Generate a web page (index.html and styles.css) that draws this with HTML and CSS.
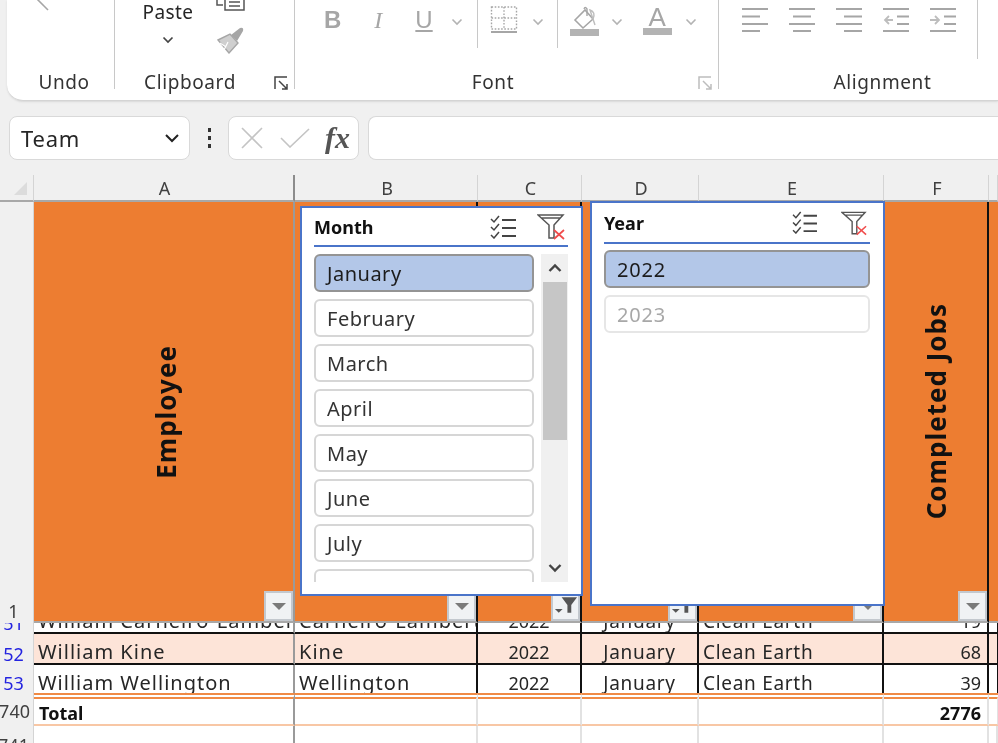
FILE: index.html
```html
<!DOCTYPE html>
<html lang="en">
<head>
<meta charset="utf-8">
<title>Team workbook</title>
<link rel="stylesheet" href="styles.css">
</head>
<body>
<div class="app">
  <header class="ribbon">
    <section class="group group-undo">
      <div class="tools">
        <svg class="undo-arrow" width="20" height="12" viewBox="0 0 20 12"><path d="M2 -2 L14 10" fill="none" stroke="#a6a6a6" stroke-width="1.6"/></svg>
      </div>
      <div class="group-label">Undo</div>
    </section>
    <section class="group group-clipboard">
      <div class="tools">
        <div class="paste">
          <span class="paste-text">Paste</span>
          <svg width="12" height="8" viewBox="0 0 12 8"><path d="M1.5 1.5 L6 6 L10.5 1.5" fill="none" stroke="#444" stroke-width="1.7"/></svg>
        </div>
        <div class="clip-icons">
          <svg width="30" height="12" viewBox="0 0 30 12"><path d="M1 -2 V5 H7 M9 -2 V10 H28 V-2 M13 2 H24 M13 6 H24" fill="none" stroke="#555" stroke-width="1.5"/></svg>
          <svg width="30" height="28" viewBox="0 0 30 28"><path d="M2 14 L14 8 L22 17 L13 27 Z" fill="#cfcfcf" stroke="#a6a6a6" stroke-width="1.4"/><path d="M15 9 L24 2 Q28 1 27 5 L21 15 Z" fill="#a6a6a6"/><path d="M8 24 L12 16 M4 17 L10 21" stroke="#fff" stroke-width="1.2"/></svg>
        </div>
      </div>
      <div class="group-label">Clipboard</div>
      <svg class="launcher" width="15" height="15" viewBox="0 0 15 15"><path d="M1 13 V1 H13 M5 5 L13 13 M8 13 H13 V8" fill="none" stroke="#444" stroke-width="1.5"/></svg>
    </section>
    <section class="group group-font">
      <div class="tools font-tools">
        <span class="fmt fmt-b">B</span>
        <span class="fmt fmt-i">I</span>
        <span class="fmt fmt-u">U</span>
        <svg class="chev chev-u" width="12" height="8" viewBox="0 0 12 8"><path d="M1.5 1.5 L6 6 L10.5 1.5" fill="none" stroke="#b3b3b3" stroke-width="1.6"/></svg>
        <i class="tool-sep sep-a"></i>
        <svg class="ico-border" width="28" height="30" viewBox="0 0 28 30"><path d="M1.5 2 H26.5 V24 H1.5 Z M14 2 V24 M1.5 13 H26.5" fill="none" stroke="#a6a6a6" stroke-width="1.4" stroke-dasharray="1.6 1.6"/><rect x="1" y="26" width="26" height="2" fill="#a6a6a6"/></svg>
        <svg class="chev chev-b" width="12" height="8" viewBox="0 0 12 8"><path d="M1.5 1.5 L6 6 L10.5 1.5" fill="none" stroke="#b3b3b3" stroke-width="1.6"/></svg>
        <i class="tool-sep sep-b"></i>
        <svg class="ico-fill" width="29" height="30" viewBox="0 0 29 30"><path d="M5 14 L15 4 L23 13 L13 22 Z" fill="none" stroke="#a6a6a6" stroke-width="1.6"/><path d="M14 3 Q15 0 17 3 V10" fill="none" stroke="#a6a6a6" stroke-width="1.4"/><path d="M23 13 Q26 6 20 4 L25 19" fill="none" stroke="#bdbdbd" stroke-width="1.4"/><rect x="0" y="23" width="29" height="7" fill="#b3b3b3"/></svg>
        <svg class="chev chev-f" width="12" height="8" viewBox="0 0 12 8"><path d="M1.5 1.5 L6 6 L10.5 1.5" fill="none" stroke="#b3b3b3" stroke-width="1.6"/></svg>
        <div class="ico-color"><span>A</span><i></i></div>
        <svg class="chev chev-c" width="12" height="8" viewBox="0 0 12 8"><path d="M1.5 1.5 L6 6 L10.5 1.5" fill="none" stroke="#b3b3b3" stroke-width="1.6"/></svg>
      </div>
      <div class="group-label">Font</div>
      <svg class="launcher" width="15" height="15" viewBox="0 0 15 15"><path d="M1 13 V1 H13 M5 5 L13 13 M8 13 H13 V8" fill="none" stroke="#bdbdbd" stroke-width="1.5"/></svg>
    </section>
    <section class="group group-align">
      <div class="tools align-tools">
        <svg width="26" height="24" viewBox="0 0 26 24"><path d="M0 1 H26 M0 8.500 H18 M0 16 H26 M0 23 H18" stroke="#a6a6a6" stroke-width="1.8"/></svg>
        <svg width="26" height="24" viewBox="0 0 26 24"><path d="M0 1 H26 M4 8.500 H22 M0 16 H26 M4 23 H22" stroke="#a6a6a6" stroke-width="1.8"/></svg>
        <svg width="26" height="24" viewBox="0 0 26 24"><path d="M0 1 H26 M8 8.500 H26 M0 16 H26 M8 23 H26" stroke="#a6a6a6" stroke-width="1.8"/></svg>
        <svg width="26" height="24" viewBox="0 0 26 24"><path d="M0 1 H26 M14 8.500 H26 M14 16 H26 M0 23 H26" stroke="#a6a6a6" stroke-width="1.8"/><path d="M10 12 H2 M6 8 L2 12 L6 16" fill="none" stroke="#bdbdbd" stroke-width="1.8"/></svg>
        <svg width="26" height="24" viewBox="0 0 26 24"><path d="M0 1 H26 M14 8.500 H26 M14 16 H26 M0 23 H26" stroke="#a6a6a6" stroke-width="1.8"/><path d="M0 12 H9 M5 8 L9 12 L5 16" fill="none" stroke="#bdbdbd" stroke-width="1.8"/></svg>
        <i class="tool-sep sep-c"></i>
      </div>
      <div class="group-label">Alignment</div>
    </section>
  </header>

  <div class="formula-bar">
    <div class="name-box">
      <span>Team</span>
      <svg width="16" height="10" viewBox="0 0 16 10"><path d="M2 2 L8 8 L14 2" fill="none" stroke="#222" stroke-width="2"/></svg>
    </div>
    <div class="dots"><i></i><i></i><i></i></div>
    <div class="fx-buttons">
      <svg width="22" height="22" viewBox="0 0 22 22"><path d="M1 1 L21 21 M21 1 L1 21" stroke="#c4c4c4" stroke-width="1.6"/></svg>
      <svg width="30" height="20" viewBox="0 0 30 20"><path d="M1 10 L10 19 L29 1" fill="none" stroke="#c4c4c4" stroke-width="1.6"/></svg>
      <span class="fx">fx</span>
    </div>
    <div class="formula-input"></div>
  </div>

  <div class="sheet">
    <div class="corner"><i></i></div>
    <div class="col">A</div>
    <div class="col">B</div>
    <div class="col">C</div>
    <div class="col">D</div>
    <div class="col">E</div>
    <div class="col">F</div>
    <div class="col"></div>

    <div class="rownum row-one">1</div>
    <div class="head freeze"><span class="vtext">Employee</span><span class="drop"><i></i></span></div>
    <div class="head black"><span class="drop"><i></i></span></div>
    <div class="head black"><span class="drop"><svg width="26" height="24" viewBox="0 0 26 24"><path d="M2 15 H10 L6 19 Z" fill="#555"/><path d="M9 3 H25 L19 11 V19 H15 V11 Z" fill="#555"/></svg></span></div>
    <div class="head black"><span class="drop"><svg width="26" height="24" viewBox="0 0 26 24"><path d="M2 15 H10 L6 19 Z" fill="#555"/><path d="M9 3 H25 L19 11 V19 H15 V11 Z" fill="#555"/></svg></span></div>
    <div class="head black"><span class="drop"><i></i></span></div>
    <div class="head black"><span class="vtext">Completed Jobs</span><span class="drop"><i></i></span></div>
    <div class="head"></div>

    <div class="rownum blue r51">51</div>
    <div class="cell r51 freeze name">William Carneiro-Lambert</div>
    <div class="cell r51 name">Carneiro-Lambert</div>
    <div class="cell r51 center num">2022</div>
    <div class="cell r51 center">January</div>
    <div class="cell r51">Clean Earth</div>
    <div class="cell r51 right num">19</div>
    <div class="cell r51"></div>

    <div class="rownum blue r52">52</div>
    <div class="cell r52 band freeze name">William Kine</div>
    <div class="cell r52 band name">Kine</div>
    <div class="cell r52 band center num">2022</div>
    <div class="cell r52 band center">January</div>
    <div class="cell r52 band">Clean Earth</div>
    <div class="cell r52 band right num">68</div>
    <div class="cell r52 band"></div>

    <div class="rownum blue r53">53</div>
    <div class="cell r53 freeze name">William Wellington</div>
    <div class="cell r53 name">Wellington</div>
    <div class="cell r53 center num">2022</div>
    <div class="cell r53 center">January</div>
    <div class="cell r53">Clean Earth</div>
    <div class="cell r53 right num">39</div>
    <div class="cell r53"></div>

    <div class="rownum r740">740</div>
    <div class="total freeze">Total</div>
    <div class="total"></div>
    <div class="total"></div>
    <div class="total"></div>
    <div class="total"></div>
    <div class="total right">2776</div>
    <div class="total"></div>

    <div class="rownum r741">741</div>
    <div class="blank freeze"></div>
    <div class="blank"></div>
    <div class="blank"></div>
    <div class="blank"></div>
    <div class="blank"></div>
    <div class="blank"></div>
    <div class="blank"></div>
  </div>

  <aside class="slicer slicer-month">
    <div class="slicer-head">
      <span class="slicer-title">Month</span>
      <svg class="ms" width="27" height="24" viewBox="0 0 27 24"><path d="M1 4 L4 7 L9 1 M1 12 L4 15 L9 9 M1 20 L4 23 L9 17" fill="none" stroke="#444" stroke-width="1.5"/><path d="M12 5 H26 M12 13 H26 M12 21 H26" stroke="#444" stroke-width="2"/></svg>
      <svg class="cf" width="28" height="27" viewBox="0 0 28 27"><path d="M1 2 H26 L17 12 V25 H12 V12 Z M4 5 H23" fill="none" stroke="#555" stroke-width="1.5"/><path d="M17 17 L27 26 M27 17 L17 26" stroke="#f04c4c" stroke-width="1.7"/></svg>
    </div>
    <div class="slicer-body">
      <div class="items">
        <div class="item on">January</div>
        <div class="item">February</div>
        <div class="item">March</div>
        <div class="item">April</div>
        <div class="item">May</div>
        <div class="item">June</div>
        <div class="item">July</div>
        <div class="item">August</div>
      </div>
      <div class="scroll">
        <div class="scroll-btn"><svg width="14" height="10" viewBox="0 0 14 10"><path d="M1.500 8 L7 2.500 L12.500 8" fill="none" stroke="#444" stroke-width="2.400"/></svg></div>
        <div class="thumb"></div>
        <div class="scroll-btn scroll-down"><svg width="14" height="10" viewBox="0 0 14 10"><path d="M1.500 2 L7 7.500 L12.500 2" fill="none" stroke="#444" stroke-width="2.400"/></svg></div>
      </div>
    </div>
  </aside>

  <aside class="slicer slicer-year">
    <div class="slicer-head">
      <span class="slicer-title">Year</span>
      <svg class="ms" width="26" height="23" viewBox="0 0 27 24"><path d="M1 4 L4 7 L9 1 M1 12 L4 15 L9 9 M1 20 L4 23 L9 17" fill="none" stroke="#444" stroke-width="1.5"/><path d="M12 5 H26 M12 13 H26 M12 21 H26" stroke="#444" stroke-width="2"/></svg>
      <svg class="cf" width="26" height="26" viewBox="0 0 28 27"><path d="M1 2 H26 L17 12 V25 H12 V12 Z M4 5 H23" fill="none" stroke="#555" stroke-width="1.5"/><path d="M17 17 L27 26 M27 17 L17 26" stroke="#f04c4c" stroke-width="1.7"/></svg>
    </div>
    <div class="slicer-body">
      <div class="items">
        <div class="item on">2022</div>
        <div class="item off">2023</div>
      </div>
    </div>
  </aside>
</div>
</body>
</html>
```

FILE: styles.css
```css
* { box-sizing: border-box; }
html, body { margin: 0; height: 100%; overflow: hidden; }
body { background: #f0f0f0; font-family: "Noto Sans", "Open Sans", sans-serif; color: #262626; }

.app { position: relative; width: 998px; height: 743px; overflow: hidden; background: #f0f0f0; filter: blur(0.4px); }

/* Ribbon */
.ribbon { display: flex; height: 101px; margin-left: 7px; background: #fff; border-radius: 0 0 0 16px; border-bottom: 1px solid #d4d4d4; box-shadow: 0 1px 2px #d8d8d8; }
.group { position: relative; display: flex; flex-direction: column; height: 89px; flex: none; }
.group::after { content: ""; position: absolute; right: 0; top: 0; bottom: 0; width: 1px; background: #c8c8c8; }
.group-undo { width: 108px; }
.group-clipboard { width: 180px; }
.group-font { width: 424px; }
.group-align { flex: 1; }
.group-align::after { display: none; }
.tools { display: flex; flex: none; height: 70px; position: relative; }
.group-label { text-align: center; font-size: 19px; line-height: 24px; letter-spacing: .6px; color: #333; }
.group-undo .group-label { padding-left: 6px; }
.group-clipboard .group-label { padding-right: 30px; }
.group-font .group-label { padding-right: 28px; }
.group-align .group-label { padding-left: 48px; }
.launcher { position: absolute; right: 6px; top: 76px; }

.undo-arrow { margin-left: 27px; }
.paste { display: flex; flex-direction: column; align-items: center; width: 50px; margin: 0 0 0 28px; }
.paste-text { font-size: 19px; line-height: 24px; letter-spacing: .4px; }
.paste svg { margin-top: 12px; }
.clip-icons { display: flex; flex-direction: column; gap: 14px; margin-left: 23px; }

.font-tools { align-items: flex-start; }
.fmt { font-size: 24px; line-height: 40px; color: #a6a6a6; font-family: "Liberation Sans", sans-serif; }
.fmt-b { font-weight: bold; margin-left: 29px; }
.fmt-i { font-family: "Liberation Serif", serif; font-style: italic; margin-left: 33px; }
.fmt-u { text-decoration: underline; margin-left: 33px; }
.chev { margin-top: 18px; }
.chev-u { margin-left: 18px; }
.tool-sep { display: block; width: 1px; background: #c8c8c8; height: 48px; }
.sep-a { margin-left: 14px; }
.ico-border { margin: 5px 0 0 12px; }
.chev-b { margin-left: 14px; }
.sep-b { margin-left: 13px; }
.ico-fill { margin: 6px 0 0 12px; }
.chev-f { margin-left: 12px; }
.ico-color { margin: 0 0 0 20px; width: 29px; text-align: center; }
.ico-color span { display: block; padding-top: 6px; font-size: 26px; line-height: 22px; color: #a6a6a6; font-family: "Liberation Sans", sans-serif; }
.ico-color i { display: block; height: 7px; background: #b3b3b3; }
.chev-c { margin-left: 13px; }
.align-tools { align-items: flex-start; gap: 21px; padding: 8px 0 0 23px; }
.align-tools .sep-c { height: 59px; margin: -8px 0 0 0; }

/* Formula bar */
.formula-bar { display: flex; align-items: center; height: 44px; margin-top: 15px; padding-left: 9px; }
.name-box { display: flex; align-items: center; justify-content: space-between; width: 181px; height: 44px; padding: 0 9px 0 11px; background: #fff; border: 1px solid #d9d9d9; border-radius: 8px; font-size: 22px; letter-spacing: .8px; }
.dots { display: flex; flex-direction: column; gap: 4px; width: 38px; align-items: center; }
.dots i { width: 3px; height: 4px; background: #333; }
.fx-buttons { display: flex; align-items: center; width: 131px; height: 44px; padding-left: 12px; background: #fff; border: 1px solid #d9d9d9; border-radius: 8px; }
.fx-buttons svg + svg { margin-left: 17px; }
.fx { margin-left: 15px; font: italic 700 30px "Liberation Serif", serif; color: #555; }
.formula-input { flex: 1; height: 44px; margin-left: 9px; background: #fff; border: 1px solid #d9d9d9; border-right: 0; border-radius: 8px 0 0 8px; }

/* Sheet */
.sheet { display: grid; grid-template-columns: 34px 261px 183px 104px 117px 185px 105px 9px; grid-template-rows: 27px 421px 11px 31px 28px 33px 30px; margin-top: 15px; font-size: 18px; background: #fff; }
.corner { position: relative; background: #f0f0f0; border-right: 1px solid #d4d4d4; border-bottom: 2px solid #a8a8a8; }
.corner i { position: absolute; left: 14px; top: 7px; width: 13px; height: 13px; background: #dcdcdc; clip-path: polygon(100% 0, 100% 100%, 0 100%); }
.col { display: flex; align-items: center; justify-content: center; padding-left: 2px; background: #f0f0f0; border-right: 1px solid #d4d4d4; border-bottom: 2px solid #a8a8a8; color: #404040; }
.col:nth-child(2) { border-right: 2px solid #8c8c8c; }
.rownum { display: flex; align-items: flex-end; justify-content: center; overflow: hidden; padding-right: 6px; background: #f0f0f0; border-right: 1px solid #d4d4d4; color: #404040; line-height: 22px; }
.row-one { line-height: 24px; }
.rownum.blue { color: #2323e0; }
.rownum.r53 { line-height: 20px; }
.rownum.r740 { justify-content: flex-end; align-items: center; padding: 2px 3px 0 0; }
.head { position: relative; display: flex; align-items: center; justify-content: center; background: #ed7d31; border-bottom: 2px solid #a8a8a8; }
.head.black { border-right: 2px solid #111; }
.head.freeze { padding-left: 4px; border-right: 2px solid #9a9a9a; }
.vtext { writing-mode: vertical-rl; transform: rotate(180deg); font-size: 26px; font-weight: 700; letter-spacing: 1px; color: #111; white-space: nowrap; }
.drop { position: absolute; right: 0; bottom: 0; display: flex; align-items: center; justify-content: center; width: 29px; height: 30px; background: #f0f2f4; border: 2px solid #c3c8ce; }
.drop i { width: 0; height: 0; border-left: 7px solid transparent; border-right: 7px solid transparent; border-top: 7px solid #7a7a7a; }

.cell { display: flex; align-items: flex-end; overflow: hidden; padding: 0 4px; font-size: 19px; line-height: 22px; letter-spacing: .7px; white-space: nowrap; background: #fff; border-right: 2px solid #111; border-bottom: 2px solid #111; }
.name { font-size: 20px; letter-spacing: 1px; }
.num { font-size: 18px; letter-spacing: 0; }
.band { background: #fde4d8; }
.r53 { border-bottom: 0; line-height: 20px; }
.center { justify-content: center; }
.right { justify-content: flex-end; padding-right: 6px; }
.cell.freeze, .total.freeze, .blank.freeze { border-right: 2px solid #9a9a9a; }
.total { display: flex; align-items: center; padding: 2px 4px 0; font-weight: 700; color: #111; background: #fff; border-right: 2px solid #e2e2e2; border-top: 6px double #f08a45; border-bottom: 2px solid #f8c7a5; }
.total.freeze { padding-left: 5px; }
.total.right { justify-content: flex-end; padding-right: 6px; }
.blank { background: #fff; border-right: 2px solid #e2e2e2; }

/* Slicers */
.slicer { position: absolute; display: flex; flex-direction: column; background: #fff; border: 2px solid #4a74c9; }
.slicer-month { left: 300px; top: 206px; width: 283px; height: 390px; padding: 0 13px 0 12px; overflow: hidden; }
.slicer-year { left: 590px; top: 201px; width: 295px; height: 405px; padding: 0 13px 0 12px; }
.slicer-head { display: flex; align-items: center; flex: none; height: 39px; margin-bottom: 7px; border-bottom: 2px solid #4a74c9; }
.slicer-year .slicer-head { height: 41px; margin-bottom: 6px; }
.slicer-title { flex: 1; font-size: 18px; font-weight: 700; color: #111; }
.slicer-month .cf { margin-right: 3px; }
.slicer-year .cf { margin-right: 3px; }
.ms { margin-right: 20px; }
.slicer-year .ms { margin-right: 23px; }
.slicer-body { display: flex; gap: 7px; flex: 1; min-height: 0; }
.items { display: flex; flex-direction: column; gap: 7px; flex: 1; min-width: 0; }
.slicer-month .items { align-self: flex-start; height: 328px; overflow: hidden; }
.item { flex: none; display: flex; align-items: center; height: 38px; padding-left: 11px; font-size: 20px; letter-spacing: .5px; color: #333; background: #fff; border: 2px solid #d6d6d6; border-radius: 6px; }
.item.on { background: #b3c7e8; border-color: #949494; color: #1c1c1c; }
.item.off { color: #a8a8a8; border-color: #e6e6e6; }
.slicer-year .item { font-size: 20px; letter-spacing: .8px; }
.scroll { position: relative; flex: none; width: 27px; background: #f0f0f0; display: flex; flex-direction: column; height: 328px; }
.scroll-btn { display: flex; align-items: center; justify-content: center; height: 28px; }
.thumb { height: 158px; margin: 0 1px 0 2px; background: #c6c6c6; }
.scroll-down { position: absolute; left: 0; right: 0; bottom: 0; }
```
